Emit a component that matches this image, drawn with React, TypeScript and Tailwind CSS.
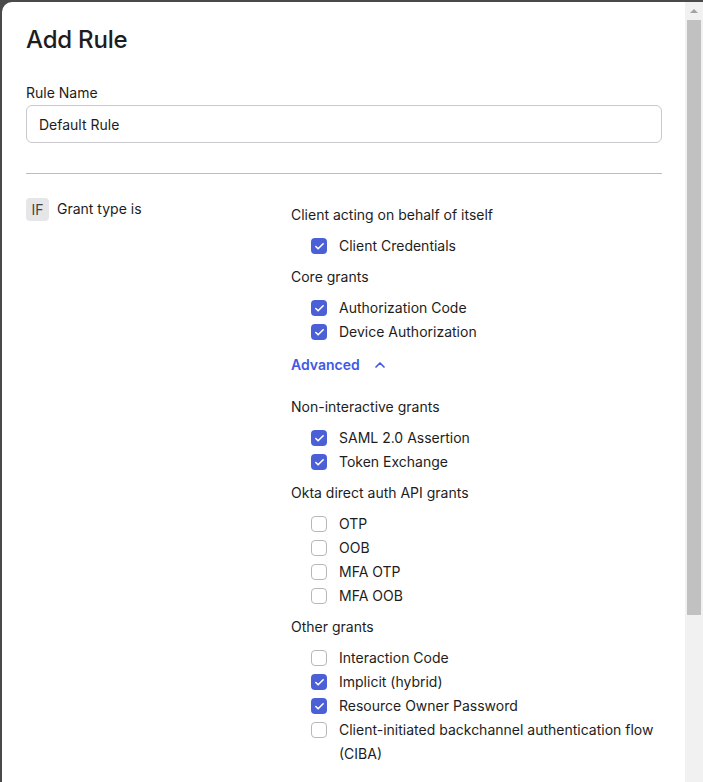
import { Check, ChevronUp } from "lucide-react";

type Item = { label: string; checked: boolean };
type Group = { title: string; items: Item[] };

const TOP: Group[] = [
  { title: "Client acting on behalf of itself", items: [{ label: "Client Credentials", checked: true }] },
  {
    title: "Core grants",
    items: [
      { label: "Authorization Code", checked: true },
      { label: "Device Authorization", checked: true },
    ],
  },
];

const ADVANCED: Group[] = [
  {
    title: "Non-interactive grants",
    items: [
      { label: "SAML 2.0 Assertion", checked: true },
      { label: "Token Exchange", checked: true },
    ],
  },
  {
    title: "Okta direct auth API grants",
    items: [
      { label: "OTP", checked: false },
      { label: "OOB", checked: false },
      { label: "MFA OTP", checked: false },
      { label: "MFA OOB", checked: false },
    ],
  },
  {
    title: "Other grants",
    items: [
      { label: "Interaction Code", checked: false },
      { label: "Implicit (hybrid)", checked: true },
      { label: "Resource Owner Password", checked: true },
      { label: "Client-initiated backchannel authentication flow (CIBA)", checked: false },
    ],
  },
];

function Box({ checked }: { checked: boolean }) {
  return checked ? (
    <span className="mt-[4px] w-4 h-4 rounded-[4px] bg-[#4b5fd6] flex items-center justify-center shrink-0">
      <Check size={11} strokeWidth={3.5} className="text-white" />
    </span>
  ) : (
    <span className="mt-[4px] w-4 h-4 rounded-[4px] border border-[#b8b8bc] bg-white shrink-0" />
  );
}

function GroupBlock({ g }: { g: Group }) {
  return (
    <div className="mb-[7px]">
      <div className="leading-6 mb-[7px]">{g.title}</div>
      {g.items.map((it) => (
        <div key={it.label} className="flex gap-3 pl-5 leading-6">
          <Box checked={it.checked} />
          <span>{it.label}</span>
        </div>
      ))}
    </div>
  );
}

export default function App() {
  return (
    <div className="w-[703px] h-[782px] bg-[#4a4a4a] pt-[2px] pl-[2px] overflow-hidden font-[Inter] text-[14px] text-[#1d1d21]">
      <div className="h-full bg-white rounded-tl-[10px] flex">
        <div className="flex-1 pl-6 pr-[23px]">
          <h1 className="text-[24px] font-medium mt-[22px] leading-8 tracking-[-0.2px]">Add Rule</h1>
          <div className="mt-[27px] leading-5">Rule Name</div>
          <div className="mt-[2px] h-[38px] border border-[#c9c9cd] rounded-md px-3 flex items-center">Default Rule</div>
          <div className="mt-[30px] border-t border-[#bdbdc0]" />
          <div className="mt-[24px] flex">
            <div className="w-[265px] flex gap-2 items-start">
              <span className="w-[23px] h-[23px] bg-[#e6e6e8] rounded text-[#444] flex items-center justify-center text-[14px]">IF</span>
              <span className="leading-[22px]">Grant type is</span>
            </div>
            <div className="flex-1 pt-[5px]">
              {TOP.map((g) => (
                <GroupBlock key={g.title} g={g} />
              ))}
              <div className="flex items-center gap-3 font-semibold text-[#3f59e4] mt-[9px] mb-[18px] leading-6">
                Advanced <ChevronUp size={16} strokeWidth={2.5} />
              </div>
              {ADVANCED.map((g) => (
                <GroupBlock key={g.title} g={g} />
              ))}
            </div>
          </div>
        </div>
        <div className="w-[18px] bg-[#f1f1f1] flex flex-col items-center">
          <div className="h-[18px] flex items-center justify-center">
            <div className="w-0 h-0 border-l-[4px] border-r-[4px] border-b-[4px] border-l-transparent border-r-transparent border-b-[#a3a3a3]" />
          </div>
          <div className="w-[14px] h-[595px] bg-[#c1c1c1]" />
        </div>
      </div>
    </div>
  );
}
